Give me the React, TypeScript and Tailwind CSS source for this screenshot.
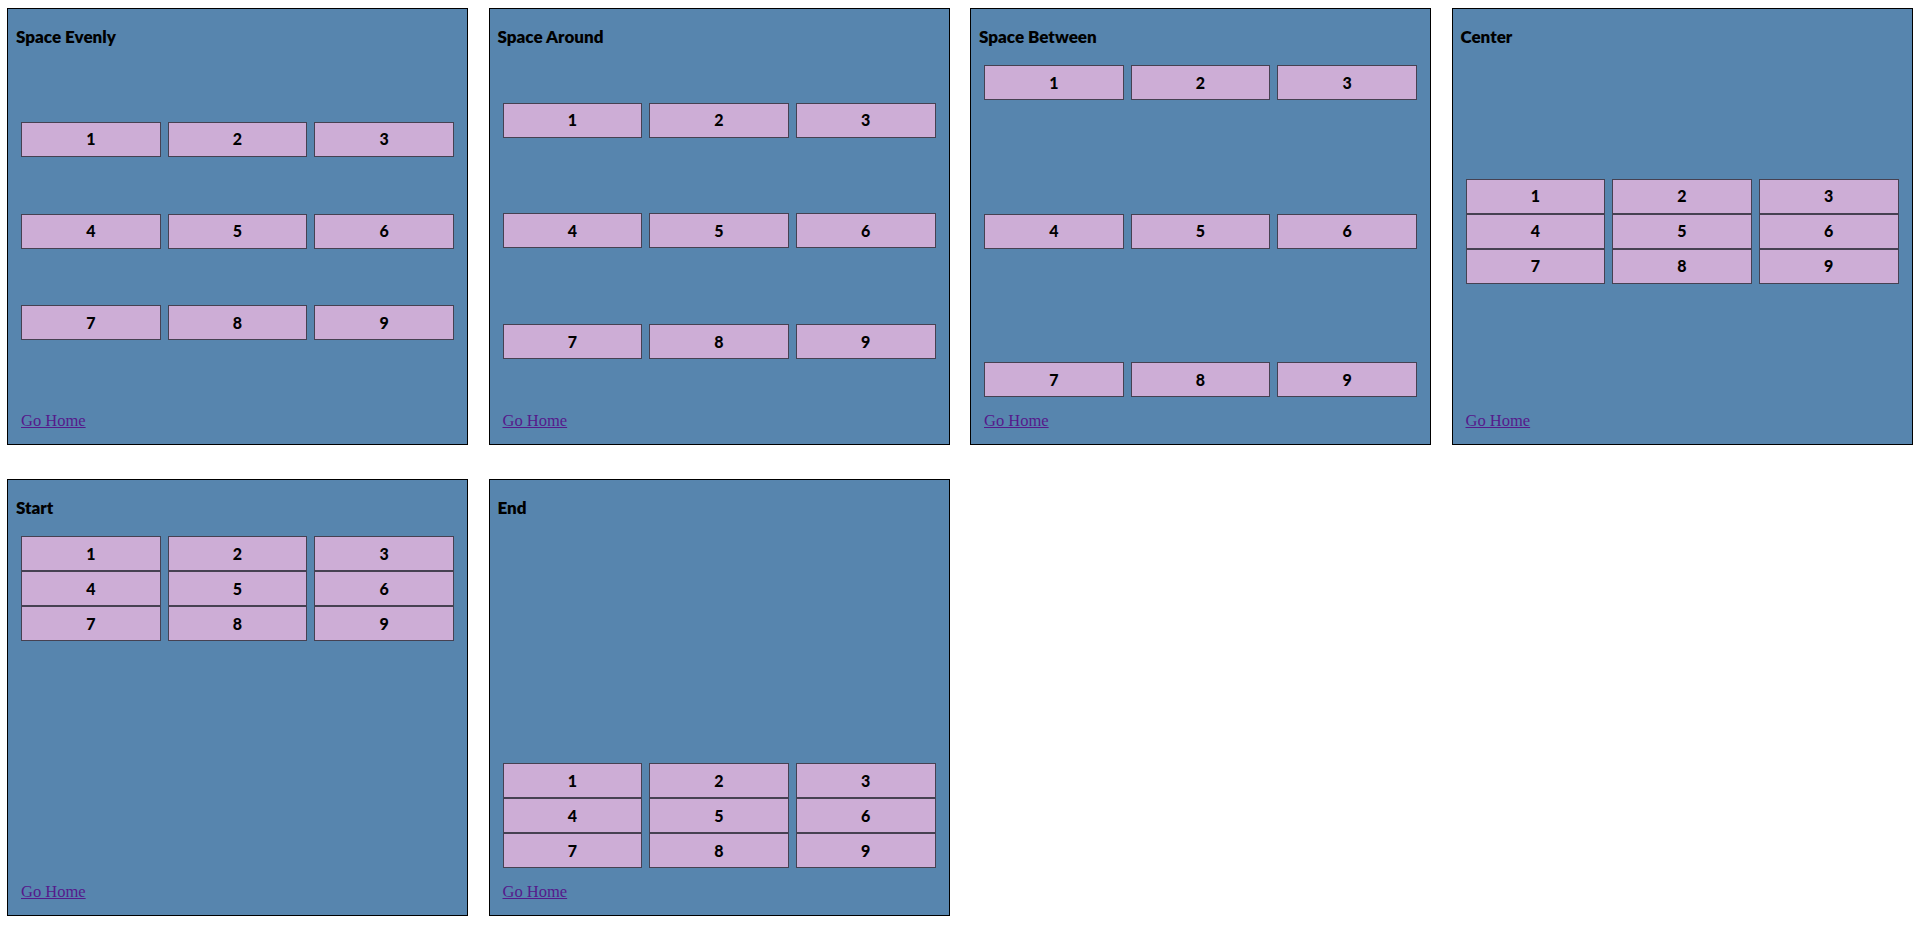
import React from "react";

type Panel = { title: string; align: string };

const panels: Panel[] = [
  { title: "Space Evenly", align: "content-evenly" },
  { title: "Space Around", align: "content-around" },
  { title: "Space Between", align: "content-between" },
  { title: "Center", align: "content-center" },
  { title: "Start", align: "content-start" },
  { title: "End", align: "content-end" },
];

function Card({ title, align }: Panel) {
  return (
    <div className="h-[437px] border border-black bg-[#5785ae] flex flex-col">
      <h3
        className="mt-[18px] ml-[8px] text-[17px] leading-[20px] font-extrabold text-black"
        style={{ fontFamily: "Lato, 'Noto Sans', sans-serif" }}
      >
        {title}
      </h3>
      <div
        className={`mt-[18px] mx-[13px] h-[332px] grid grid-cols-3 auto-rows-[35px] gap-x-[7px] gap-y-0 ${align}`}
      >
        {[1, 2, 3, 4, 5, 6, 7, 8, 9].map((n) => (
          <div
            key={n}
            className="border border-[#464152] bg-[#cdadd6] flex items-center justify-center text-[16px] font-black text-black"
            style={{ fontFamily: "Lato, 'Noto Sans', sans-serif" }}
          >
            {n}
          </div>
        ))}
      </div>
      <div className="mt-[11px] mx-[13px]">
        <a
          href="#"
          className="text-[16.5px] leading-[19px] text-[#551a8b] underline"
          style={{ fontFamily: "'Liberation Serif', 'Times New Roman', serif" }}
        >
          Go Home
        </a>
      </div>
    </div>
  );
}

export default function App() {
  return (
    <div className="w-[1917px] min-h-[927px] bg-white pl-[7px] pt-[8px]">
      <div className="grid grid-cols-[repeat(4,461px)] gap-x-[20.5px] gap-y-[34px]">
        {panels.map((p) => (
          <Card key={p.title} {...p} />
        ))}
      </div>
    </div>
  );
}
